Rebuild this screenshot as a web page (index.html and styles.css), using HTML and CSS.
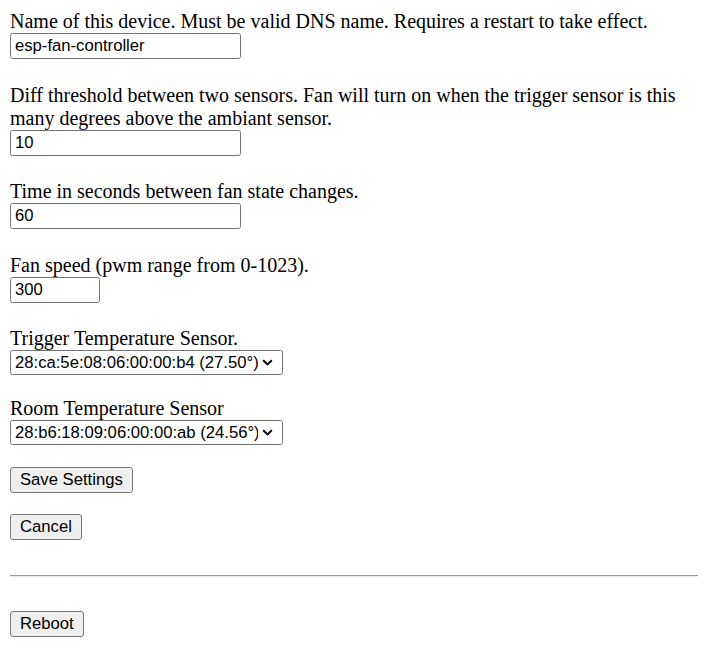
FILE: index.html
```html
<!DOCTYPE html>
<html>
<head>
<meta charset="utf-8">
<link rel="stylesheet" href="styles.css">
</head>
<body>
<form class="settings">
  <div class="field">
    <label class="label" for="name">Name of this device. Must be valid DNS name. Requires a restart to take effect.</label>
    <input class="text" id="name" type="text" value="esp-fan-controller">
  </div>
  <div class="field">
    <label class="label" for="diff">Diff threshold between two sensors. Fan will turn on when the trigger sensor is this many degrees above the ambiant sensor.</label>
    <input class="text" id="diff" type="text" value="10">
  </div>
  <div class="field">
    <label class="label" for="time">Time in seconds between fan state changes.</label>
    <input class="text" id="time" type="text" value="60">
  </div>
  <div class="field">
    <label class="label" for="speed">Fan speed (pwm range from 0-1023).</label>
    <input class="text short" id="speed" type="text" value="300">
  </div>
  <div class="field sel">
    <label class="label" for="trig">Trigger Temperature Sensor.</label>
    <select class="select" id="trig">
      <option>28:ca:5e:08:06:00:00:b4 (27.50°)</option>
      <option>28:b6:18:09:06:00:00:ab (24.56°)</option>
    </select>
  </div>
  <div class="field sel">
    <label class="label" for="room">Room Temperature Sensor</label>
    <select class="select" id="room">
      <option>28:b6:18:09:06:00:00:ab (24.56°)</option>
      <option>28:ca:5e:08:06:00:00:b4 (27.50°)</option>
    </select>
  </div>
  <div class="actions">
    <button class="btn" type="submit">Save Settings</button>
    <button class="btn" type="button">Cancel</button>
  </div>
</form>
<hr class="rule">
<div class="reboot">
  <button class="btn" type="button">Reboot</button>
</div>
</body>
</html>
```
FILE: styles.css
```css
html, body {
  background: #ffffff;
}
body {
  margin: 10px;
  font-family: "Liberation Serif", "Times New Roman", serif;
  font-size: 20px;
  line-height: 23px;
  color: #000000;
}
.settings {
  display: flex;
  flex-direction: column;
}
.field {
  display: flex;
  flex-direction: column;
  align-items: flex-start;
  margin-bottom: 24.5px;
}
.field.sel {
  margin-bottom: 22px;
}
.label {
  display: block;
}
.text {
  box-sizing: border-box;
  width: 231px;
  height: 26px;
  margin: 0;
  padding: 1px 4px;
  font-family: "Liberation Sans", Arial, sans-serif;
  font-size: 16.67px;
  color: #000;
  border: 1px solid #767676;
  border-radius: 2.5px;
  background: #fff;
}
.text.short {
  width: 90px;
}
.select {
  -webkit-appearance: none;
  appearance: none;
  box-sizing: border-box;
  width: 273px;
  height: 25px;
  margin: 0;
  padding: 0 24px 0 4px;
  font-family: "Liberation Sans", Arial, sans-serif;
  font-size: 16.67px;
  color: #000;
  border: 1px solid #767676;
  border-radius: 2.5px;
  background-color: #fff;
  background-image: url("data:image/svg+xml,%3Csvg xmlns='http://www.w3.org/2000/svg' width='11' height='7' viewBox='0 0 11 7'%3E%3Cpath d='M1.2 1.2 L5.5 5.4 L9.8 1.2' fill='none' stroke='%23000' stroke-width='2'/%3E%3C/svg%3E");
  background-repeat: no-repeat;
  background-position: right 9px center;
  background-size: 11px 7px;
}
.actions {
  display: flex;
  flex-direction: column;
  align-items: flex-start;
  gap: 21px;
}
.btn {
  box-sizing: border-box;
  height: 26px;
  margin: 0;
  padding: 1px 9px;
  font-family: "Liberation Sans", Arial, sans-serif;
  font-size: 16.67px;
  color: #000;
  background: #efefef;
  border: 1px solid #767676;
  border-radius: 3px;
}
.rule {
  margin: 34.5px 0 0 0;
  border: 0;
  border-top: 1px solid #9a9a9a;
  border-bottom: 1px solid #eeeeee;
  height: 0;
}
.reboot {
  margin-top: 34.5px;
}
```
